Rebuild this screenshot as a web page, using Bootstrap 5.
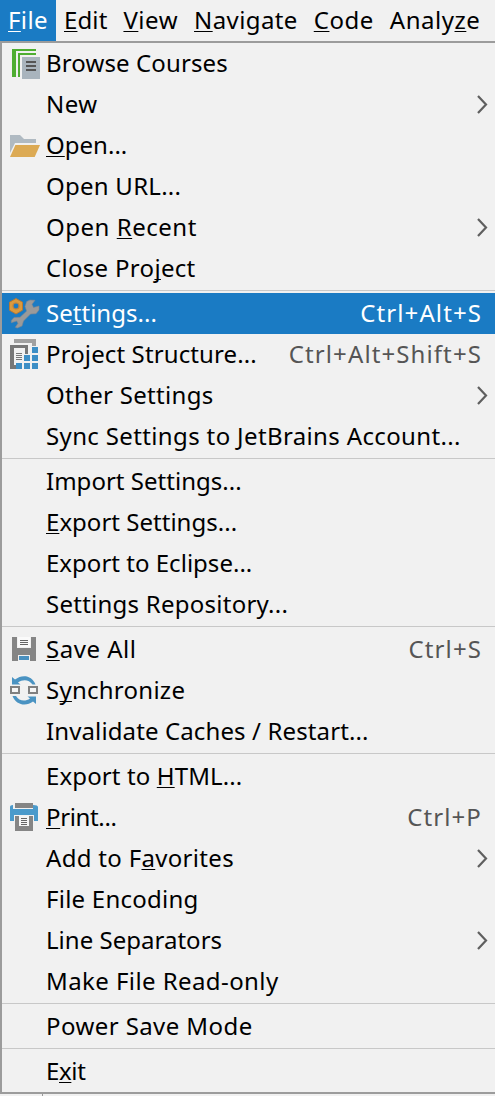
<!DOCTYPE html>
<html lang="en">
<head>
<meta charset="utf-8">
<meta name="viewport" content="width=device-width, initial-scale=1">
<title>File menu</title>
<link href="https://cdn.jsdelivr.net/npm/bootstrap@5.3.0/dist/css/bootstrap.min.css" rel="stylesheet">
<style>
body{background:#f1f1f1;color:#000;font-family:"Noto Sans","Open Sans",sans-serif;font-size:24px;line-height:39px;overflow:hidden;white-space:nowrap}
u{text-decoration:underline;text-decoration-thickness:1px;text-underline-offset:2px;text-decoration-skip-ink:none}
.menubar{height:41px;letter-spacing:.4px}
.menubar a{color:#000;text-decoration:none;padding:0 8px}
.menubar a.active{background:#1a7bc4;color:#fff}
.file-menu{border:solid #9c9c9c;border-width:2px 0 2px 2px}
.entry{height:41px;padding:0 14px 0 6px}
.entry.active{background:#1a7bc4;color:#fff}
.entry svg{flex:none}
.icon{width:38px;height:41px;flex:none}
.keys{color:#555;letter-spacing:1.1px;margin-right:-1px}
.active .keys{color:#fff}
.sub{padding-right:7px}
.rule{height:4px;padding-top:1px}
.rule::before{content:"";display:block;height:1px;background:#c8c8c8}
.below{height:2px;width:43px;border-right:1px solid #999}
.t-tight{letter-spacing:-.35px}
.t-0{letter-spacing:.02px}
.t-1{letter-spacing:.12px}
.t-2{letter-spacing:.25px}
.t-3{letter-spacing:.31px}
.t-35{letter-spacing:.36px}
.t-4{letter-spacing:.42px}
.t-5{letter-spacing:.52px}
</style>
</head>
<body>
<nav class="menubar d-flex">
<a href="#" class="active"><u>F</u>ile</a><a href="#" class="t-1"><u>E</u>dit</a><a href="#" class="t-5"><u>V</u>iew</a><a href="#"><u>N</u>avigate</a><a href="#" class="t-5"><u>C</u>ode</a><a href="#" class="t-5">Analy<u>z</u>e</a>
</nav>
<div class="file-menu">
<div class="entry d-flex"><svg class="icon" viewBox="0 0 38 41"><path fill="#4fae32" d="M4 6h24v2H8v26H4zM10 10h18v2H12v22h-2z"/><path fill="#a9b4bd" d="M14 14h18v22H14z"/><path fill="#555" d="M18 18h10v2H18zM18 22h10v2H18zM18 26h10v2H18z"/></svg><span class="t-1">Browse Courses</span></div>
<div class="entry sub d-flex"><span class="icon"></span><span class="t-5">New</span><svg class="ms-auto" width="12" height="41"><path d="M2 12l8 8.500-8 8.500" fill="none" stroke="#5f5f5f" stroke-width="2.200"/></svg></div>
<div class="entry d-flex"><svg class="icon" viewBox="0 0 38 41"><path fill="#b0bac2" d="M2 10h10l4 4h12v4H7L2 28z"/><path fill="#dcaa54" d="M7.4 20H32l-5.3 12H2z"/></svg><span class="t-0"><u>O</u>pen...</span></div>
<div class="entry d-flex"><span class="icon"></span><span class="t-2">Open URL...</span></div>
<div class="entry sub d-flex"><span class="icon"></span><span class="t-5">Open <u>R</u>ecent</span><svg class="ms-auto" width="12" height="41"><path d="M2 12l8 8.500-8 8.500" fill="none" stroke="#5f5f5f" stroke-width="2.200"/></svg></div>
<div class="entry d-flex"><span class="icon"></span><span class="t-3">Close Pro<u>j</u>ect</span></div>
<div class="rule"></div>
<div class="entry active d-flex"><svg class="icon" viewBox="0 0 38 41"><path fill="#dc9a3c" stroke="#b87a35" d="M8 5.500l6.500 3.700v8L8 21l-6.500-3.800v-8z"/><circle cx="8" cy="13" r="3" fill="#1a7bc4" stroke="#b98343" stroke-width="1.200"/><path fill="#9a9a9a" stroke="#7d8790" stroke-width=".6" d="M22 7l5 .3-3 4 1.500 3.200 5.500-1.500v4l-3 3.700-5.500.300L15.500 28l-1.500 5-4.700 2-2-.700L10 30.300 8.700 28l-5.400 1.700V27.500L6 24.500l6-.200 6.700-6.300L17 13.500l1.700-5z"/></svg><span class="t-0">Se<u>t</u>tings...</span><span class="keys ms-auto">Ctrl+Alt+S</span></div>
<div class="entry d-flex"><svg class="icon" viewBox="0 0 38 41"><path fill="#a0a0a0" d="M6 5h22v7h-4V9H6z"/><path fill="#777" d="M2 11h18v9h-3v-6H6v17h2v4H2z"/><path fill="#777" d="M8 19h6v1H8zM8 21h6v1H8zM8 23h6v1H8zM8 25h6v1H8z"/><path fill="#3d8fc6" d="M24 13h6v6h-6zM16 21h6v6h-6zM24 21h6v6h-6zM8 29h6v6H8zM16 29h6v6h-6zM24 29h6v6h-6z"/></svg><span class="t-1">Project Structure...</span><span class="keys ms-auto">Ctrl+Alt+Shift+S</span></div>
<div class="entry sub d-flex"><span class="icon"></span><span class="t-3">Other Settings</span><svg class="ms-auto" width="12" height="41"><path d="M2 12l8 8.500-8 8.500" fill="none" stroke="#5f5f5f" stroke-width="2.200"/></svg></div>
<div class="entry d-flex"><span class="icon"></span><span class="t-35">Sync Settings to JetBrains Account...</span></div>
<div class="rule"></div>
<div class="entry d-flex"><span class="icon"></span><span class="t-0">Import Settings...</span></div>
<div class="entry d-flex"><span class="icon"></span><span class="t-0"><u>E</u>xport Settings...</span></div>
<div class="entry d-flex"><span class="icon"></span><span class="t-0">Export to Eclipse...</span></div>
<div class="entry d-flex"><span class="icon"></span><span class="t-2">Settings Repository...</span></div>
<div class="rule"></div>
<div class="entry d-flex"><svg class="icon" viewBox="0 0 38 41"><path fill="#858585" d="M4 8h5v11h14V8h5v24h-6v-6H10v6H4z"/><path fill="#fafafa" d="M10 8h12v10H10z"/><path fill="#666" d="M12 11h8v1h-8zM12 13h8v1h-8zM12 15h8v1h-8z"/><path fill="#4a90bf" d="M11 27h10v4H11z"/></svg><span class="t-5"><u>S</u>ave All</span><span class="keys ms-auto">Ctrl+S</span></div>
<div class="entry d-flex"><svg class="icon" viewBox="0 0 38 41"><path fill="#4a93c2" d="M4 7l3 2.500C14 4 24 5 27.500 14.500h-3C21 9.500 15 9 10 12.500l2.500 2H4zM28 34l-3-2.500C18 37 8 35 4.500 26h3.500c3 5 9 6 14 2.500L19.500 26.500H28z"/><path fill="#f5f5f5" stroke="#808080" stroke-width="2" d="M3 17h8v6H3zM21 17h8v6h-8z"/></svg><span class="t-2">S<u>y</u>nchronize</span></div>
<div class="entry d-flex"><span class="icon"></span><span class="t-1">Invalidate Caches / Restart...</span></div>
<div class="rule"></div>
<div class="entry d-flex"><span class="icon"></span><span class="t-1">Export to <u>H</u>TML...</span></div>
<div class="entry d-flex"><svg class="icon" viewBox="0 0 38 41"><path fill="#858585" d="M7 6h18v5H7z"/><path fill="#4a9acb" d="M2 10q0-2 3-2v4h20V8q5 0 5 2v14h-4v-6H6v6H2z"/><path fill="#858585" d="M7 19h4v10h10V19h4v15H7z"/><path fill="#f5f5f5" d="M11 19h10v10H11z"/><path fill="#666" d="M13 21h6v1h-6zM13 23h6v1h-6zM13 25h6v1h-6zM13 27h6v1h-6z"/></svg><span class="t-tight"><u>P</u>rint...</span><span class="keys ms-auto">Ctrl+P</span></div>
<div class="entry sub d-flex"><span class="icon"></span><span class="t-3">Add to F<u>a</u>vorites</span><svg class="ms-auto" width="12" height="41"><path d="M2 12l8 8.500-8 8.500" fill="none" stroke="#5f5f5f" stroke-width="2.200"/></svg></div>
<div class="entry d-flex"><span class="icon"></span><span class="t-2">File Encoding</span></div>
<div class="entry sub d-flex"><span class="icon"></span><span class="t-0">Line Separators</span><svg class="ms-auto" width="12" height="41"><path d="M2 12l8 8.500-8 8.500" fill="none" stroke="#5f5f5f" stroke-width="2.200"/></svg></div>
<div class="entry d-flex"><span class="icon"></span><span class="t-4">Make File Read-only</span></div>
<div class="rule"></div>
<div class="entry d-flex"><span class="icon"></span><span class="t-4">Power Save Mode</span></div>
<div class="rule"></div>
<div class="entry d-flex"><span class="icon"></span><span class="t-tight">E<u>x</u>it</span></div>
</div>
<div class="below"></div>
<script src="https://cdn.jsdelivr.net/npm/bootstrap@5.3.0/dist/js/bootstrap.bundle.min.js"></script>
</body>
</html>
